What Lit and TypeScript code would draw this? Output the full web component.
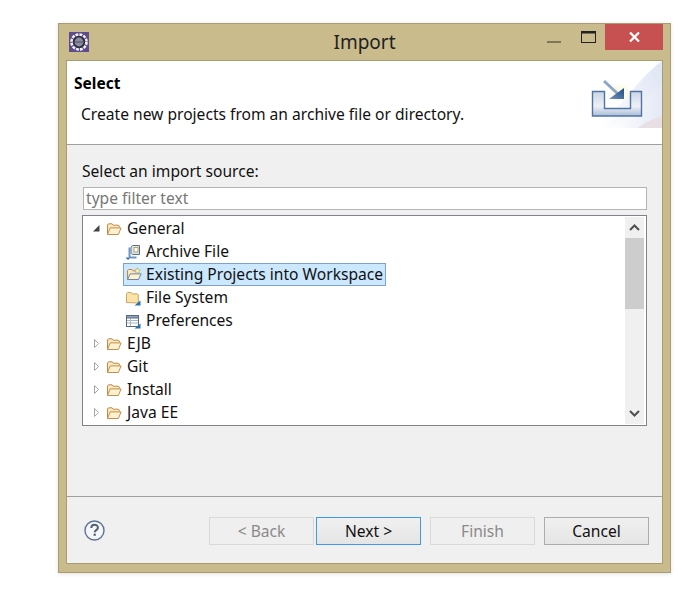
import { html, css, LitElement, svg } from 'lit';
import { customElement } from 'lit/decorators.js';

const folder = svg`<svg class="ico" viewBox="0 0 16 16" width="16" height="16">
  <path d="M1.5 13.5V4l1-1.2h3.6l1 1.4h5.4l.8.8v1.5" fill="#fbe9bd" stroke="#b98b4c"/>
  <path d="M1.5 13.5l2.6-6.6h11l-2.7 6.6z" fill="#fdf1cf" stroke="#c2914f"/>
</svg>`;

const archive = svg`<svg class="ico" viewBox="0 0 16 16" width="16" height="16">
  <path d="M6 4.5C6 2.5 7 1.5 8 1.5h6.5v9H8c-1 0-2-1-2-2z" fill="#dbe6f2" stroke="#4f739c"/>
  <rect x="9" y="3.5" width="4" height="4.5" fill="#fff" stroke="#c9a04e"/>
  <path d="M4.5 3.5v8.5c0 1 1 1.5 2 1.5h5" fill="none" stroke="#6f97c2" stroke-width="2"/>
  <path d="M.5 13.5h5l-2.5 2.5z" fill="#2a6fb0"/>
</svg>`;

const projects = svg`<svg class="ico" viewBox="0 0 16 16" width="16" height="16">
  <path d="M1.5 12.5V3.5l1-1h3.5l1 1.4h3" fill="#fbe9bd" stroke="#b98b4c"/>
  <path d="M1.5 12.5l2.6-5.6h11l-2.7 5.6z" fill="#fdf1cf" stroke="#6d84a3"/>
  <path d="M11.5 .8l.9 1.9 2 .3-1.4 1.4.3 2-1.8-1-1.8 1 .3-2-1.4-1.4 2-.3z" fill="#fff6b8" stroke="#b9a35a" stroke-width=".7"/>
</svg>`;

const fileSystem = svg`<svg class="ico" viewBox="0 0 16 16" width="16" height="16">
  <path d="M1.5 12.5V3.5l1-1h3.6l1 1.4h5.4l.8.8v8.3z" fill="#fbe2a6" stroke="#c9a468"/>
  <path d="M9.5 15.5h6V10.5z" fill="#2a6fb0"/>
</svg>`;

const prefs = svg`<svg class="ico" viewBox="0 0 16 16" width="16" height="16">
  <rect x="1.5" y="2.5" width="12" height="11" fill="#fff" stroke="#5a6b80"/>
  <rect x="1.5" y="2.5" width="12" height="2.5" fill="#8fa3bc" stroke="#5a6b80"/>
  <path d="M2 7.5h11M2 10h11M5.5 5v8" stroke="#a8b6c8"/>
  <path d="M9.5 15.5h6V10.5z" fill="#2a6fb0"/>
</svg>`;

const tree = [
  { label: 'General', level: 0, open: true, icon: folder },
  { label: 'Archive File', level: 1, icon: archive },
  { label: 'Existing Projects into Workspace', level: 1, selected: true, icon: projects },
  { label: 'File System', level: 1, icon: fileSystem },
  { label: 'Preferences', level: 1, icon: prefs },
  { label: 'EJB', level: 0, icon: folder },
  { label: 'Git', level: 0, icon: folder },
  { label: 'Install', level: 0, icon: folder },
  { label: 'Java EE', level: 0, icon: folder },
];

@customElement('app-root')
export class AppRoot extends LitElement {
  static styles = css`
    :host {
      display: block;
      width: 700px;
      height: 593px;
      padding: 23px 0 0 58px;
      box-sizing: border-box;
      background: #fff;
      font-family: "Noto Sans", "Open Sans", sans-serif;
      font-size: 15.6px;
      color: #111;
      overflow: hidden;
    }

    .window {
      width: 613px;
      height: 550px;
      box-sizing: border-box;
      background: #c9bb8c;
      border: 1px solid #a89c74;
      box-shadow: 0 1px 4px rgba(0, 0, 0, 0.12);
      display: flex;
      flex-direction: column;
    }

    .titlebar {
      height: 36px;
      flex: none;
      display: flex;
      align-items: flex-start;
      position: relative;
    }
    .app-icon {
      margin: 8px 0 0 10px;
    }
    .title {
      position: absolute;
      left: 0;
      right: 0;
      top: 5px;
      text-align: center;
      font-size: 19px;
      line-height: 26px;
      color: #222;
    }
    .controls {
      margin-left: auto;
      margin-right: 7px;
      display: flex;
    }
    .ctl {
      width: 34px;
      height: 26px;
      display: flex;
      align-items: center;
      justify-content: center;
    }
    .ctl.close {
      width: 58px;
      background: #c75050;
    }

    .content {
      flex: 1;
      margin: 0 7px 8px 7px;
      background: #f0f0f0;
      border: 1px solid #a89c74;
      display: flex;
      flex-direction: column;
      min-height: 0;
    }

    .header {
      height: 84px;
      flex: none;
      box-sizing: border-box;
      background: #fff;
      border-bottom: 1px solid #a0a0a0;
      position: relative;
      padding: 10px 0 0 7px;
    }
    .header h1 {
      margin: 0;
      font-size: 15.5px;
      line-height: 24px;
      font-weight: 700;
      color: #000;
    }
    .header p {
      margin: 8px 0 0 7px;
      line-height: 22px;
    }
    .banner {
      position: absolute;
      top: 0;
      right: 0;
    }

    .body {
      flex: 1;
      padding: 15px 15px 0 15px;
      min-height: 0;
    }
    .source {
      line-height: 22px;
    }
    .filter {
      height: 23px;
      box-sizing: border-box;
      margin: 5px 0 0 1px;
      border: 1px solid #b4b4b4;
      background: #fff;
      color: #777;
      line-height: 21px;
      padding-left: 2px;
    }
    .tree {
      height: 211px;
      box-sizing: border-box;
      margin-top: 5px;
      border: 1px solid #82828c;
      background: #fff;
      padding: 1px 2px 1px 0;
      display: flex;
      overflow: hidden;
    }
    .rows {
      flex: 1;
      min-width: 0;
    }
    .row {
      height: 23px;
      display: flex;
      align-items: center;
      padding-left: 9px;
      white-space: nowrap;
    }
    .row.child {
      padding-left: 42px;
    }
    .twist {
      width: 14px;
      flex: none;
      display: flex;
      align-items: center;
    }
    .ico {
      flex: none;
      margin-right: 4px;
    }
    .label {
      line-height: 21px;
      padding-right: 2px;
      border: 1px solid transparent;
    }
    .row.selected .hl {
      height: 21px;
      margin-left: -2px;
      padding-left: 2px;
      background: #cce8ff;
      border: 1px solid #7da2ce;
    }
    .row.selected .label {
      border: none;
    }
    .hl {
      display: flex;
      align-items: center;
    }

    .scrollbar {
      width: 19px;
      flex: none;
      background: #f0f0f0;
      display: flex;
      flex-direction: column;
    }
    .arrow {
      height: 21px;
      flex: none;
      display: flex;
      align-items: center;
      justify-content: center;
    }
    .track {
      flex: 1;
    }
    .thumb {
      height: 71px;
      background: #cdcdcd;
    }

    .footer {
      height: 67px;
      flex: none;
      box-sizing: border-box;
      border-top: 1px solid #a0a0a0;
      display: flex;
      align-items: flex-start;
      padding: 20px 13px 0 17px;
    }
    .help {
      margin-top: 3px;
      margin-right: auto;
    }
    .btn {
      width: 105px;
      height: 28px;
      box-sizing: border-box;
      border: 1px solid #acacac;
      background: linear-gradient(#f0f0f0, #e5e5e5);
      display: flex;
      align-items: center;
      justify-content: center;
      line-height: 20px;
      color: #111;
    }
    .btn.disabled {
      background: #efefef;
      border-color: #d9d9d9;
      color: #8a8a8a;
    }
    .btn.default {
      border-color: #3c9ae8;
      margin-left: 2px;
      margin-right: 9px;
    }
    .btn.cancel {
      margin-left: 9px;
    }
  `;

  private renderRow(r: (typeof tree)[number]) {
    const twist = r.level
      ? ''
      : html`<span class="twist">
          ${r.open
            ? html`<svg width="9" height="9" viewBox="0 0 9 9"><path d="M1 7.5h6.5V1z" fill="#444"/></svg>`
            : html`<svg width="9" height="11" viewBox="0 0 9 11"><path d="M2.5 1.5l4 4-4 4z" fill="#fff" stroke="#a6a6a6"/></svg>`}
        </span>`;
    return html`<div class="row ${r.level ? 'child' : ''} ${r.selected ? 'selected' : ''}">
      ${twist}
      <span class="hl">${r.icon}<span class="label">${r.label}</span></span>
    </div>`;
  }

  render() {
    return html`
      <div class="window">
        <div class="titlebar">
          <svg class="app-icon" width="20" height="20" viewBox="0 0 20 20">
            <rect width="20" height="20" fill="#5d4d8a"/>
            <circle cx="10" cy="10" r="7.4" fill="none" stroke="#f0f0f4" stroke-width="2.8" stroke-dasharray="2.8 1.1"/>
            <circle cx="10" cy="10" r="6.2" fill="#2e2c40"/>
            <circle cx="10" cy="10" r="4.4" fill="#8d8aa2"/>
            <path d="M5.6 10h8.8" stroke="#5a5772" stroke-width="1.2"/>
          </svg>
          <div class="title">Import</div>
          <div class="controls">
            <div class="ctl"><svg width="14" height="14" viewBox="0 0 14 14"><rect y="11" width="14" height="2" fill="#7f7659"/></svg></div>
            <div class="ctl"><svg width="15" height="13" viewBox="0 0 15 13"><rect x=".5" y=".5" width="14" height="11" fill="none" stroke="#222"/><rect width="15" height="2.5" fill="#222"/></svg></div>
            <div class="ctl close"><svg width="11" height="10" viewBox="0 0 11 10"><path d="M1 .5l9 9M10 .5l-9 9" stroke="#fff" stroke-width="2.2"/></svg></div>
          </div>
        </div>
        <div class="content">
          <div class="header">
            <h1>Select</h1>
            <p>Create new projects from an archive file or directory.</p>
            <svg class="banner" width="72" height="67" viewBox="0 0 72 67">
              <defs>
                <linearGradient id="bg" x1="0" y1="0.6" x2="1" y2="0.2">
                  <stop offset="0" stop-color="#ffffff"/>
                  <stop offset="1" stop-color="#dfe6f5"/>
                </linearGradient>
                <linearGradient id="bg2" x1="0" y1="0" x2="1" y2="0">
                  <stop offset="0" stop-color="#ffffff"/>
                  <stop offset="1" stop-color="#e3e9f6"/>
                </linearGradient>
                <linearGradient id="tray" x1="0" y1="0" x2="0" y2="1">
                  <stop offset="0" stop-color="#c9d5e6"/>
                  <stop offset="0.6" stop-color="#eef1f6"/>
                  <stop offset="1" stop-color="#a9bcd6"/>
                </linearGradient>
                <linearGradient id="head" x1="0" y1="1" x2="1" y2="0">
                  <stop offset="0" stop-color="#6f93bf"/>
                  <stop offset="1" stop-color="#1f4a86"/>
                </linearGradient>
              </defs>
              <path d="M72 0V67H0C24 60 42 22 72 0z" fill="url(#bg)"/>
              <path d="M72 24V67H20C44 56 56 36 72 24z" fill="url(#bg2)"/>
              <path d="M48 67C54 62 60 59 72 55V67z" fill="#e8dfe4"/>
              <ellipse cx="30" cy="32" rx="9" ry="8" fill="#fbfbe6"/>
              <path d="M2.5 30.5h12v17h26v-17h11v24.5h-49z" fill="url(#tray)" stroke="#4f74a4" stroke-width="1.4"/>
              <path d="M14 20l14 13" stroke="#8aa6c8" stroke-width="3"/>
              <path d="M34 27v11H19z" fill="url(#head)"/>
            </svg>
          </div>
          <div class="body">
            <div class="source">Select an import source:</div>
            <div class="filter">type filter text</div>
            <div class="tree">
              <div class="rows">${tree.map((r) => this.renderRow(r))}</div>
              <div class="scrollbar">
                <div class="arrow"><svg width="11" height="7" viewBox="0 0 11 7"><path d="M1 6l4.5-4.5L10 6" fill="none" stroke="#505050" stroke-width="2"/></svg></div>
                <div class="thumb"></div>
                <div class="track"></div>
                <div class="arrow"><svg width="11" height="7" viewBox="0 0 11 7"><path d="M1 1l4.5 4.5L10 1" fill="none" stroke="#505050" stroke-width="2"/></svg></div>
              </div>
            </div>
          </div>
          <div class="footer">
            <svg class="help" width="21" height="21" viewBox="0 0 21 21">
              <circle cx="10.5" cy="10.5" r="9.5" fill="#f4f6fa" stroke="#5f7390" stroke-width="1.4"/>
              <path d="M7.3 8c0-4.2 6.6-4.2 6.6-.3 0 2.3-3.2 2.5-3.2 4.6" fill="none" stroke="#55606e" stroke-width="2"/>
              <rect x="9.6" y="13.6" width="2.2" height="2.2" fill="#55606e"/>
            </svg>
            <div class="btn disabled">&lt; Back</div>
            <div class="btn default">Next &gt;</div>
            <div class="btn disabled">Finish</div>
            <div class="btn cancel">Cancel</div>
          </div>
        </div>
      </div>
    `;
  }
}
